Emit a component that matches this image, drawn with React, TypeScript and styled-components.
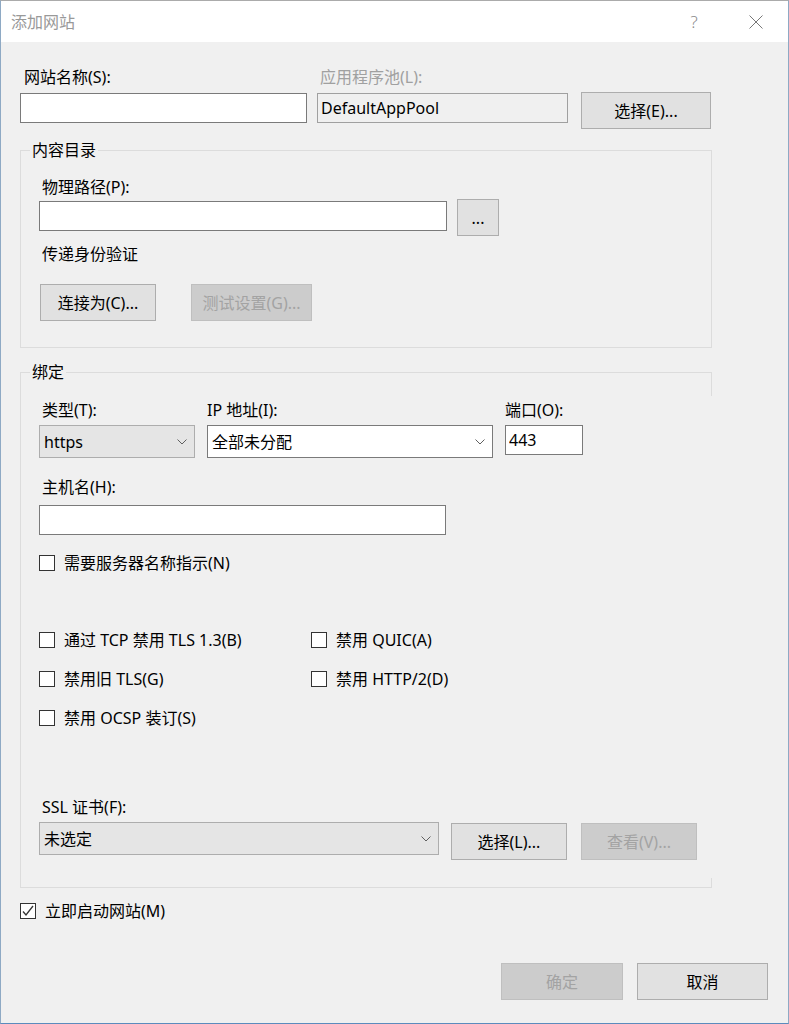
import React from "react";
import styled, { createGlobalStyle } from "styled-components";

const GlobalStyle = createGlobalStyle`
  html, body { margin: 0; padding: 0; background: #f0f0f0; }
  body {
    font-family: "Noto Sans", "Noto Sans CJK SC", sans-serif;
    font-size: 16px;
    color: #000;
  }
  * { box-sizing: border-box; }
`;

const Window = styled.div`
  width: 789px;
  height: 1024px;
  border: 1px solid;
  border-color: #ababab #8ea9c4 #5b8bbd #8ea9c4;
  background: #f0f0f0;
  display: flex;
  flex-direction: column;
  overflow: hidden;
`;

const TitleBar = styled.div`
  height: 41px;
  flex-shrink: 0;
  background: #fff;
  display: flex;
  align-items: center;
  padding: 0 12px 0 10px;
`;

const Title = styled.div`
  flex: 1;
  font-size: 16px;
  line-height: 20px;
  color: #999;
`;

const TitleControls = styled.div`
  display: flex;
  align-items: center;
  gap: 22px;
`;

const TitleButton = styled.div`
  width: 40px;
  height: 30px;
  display: flex;
  align-items: center;
  justify-content: center;
  color: #8a8a8a;
  font-size: 17px;
  font-weight: 300;
`;

const Body = styled.div`
  flex: 1;
  display: flex;
  flex-direction: column;
  padding: 25px 20px 0 19px;
`;

const Row = styled.div<{ $mt?: number }>`
  display: flex;
  align-items: flex-start;
  margin-top: ${(p) => p.$mt ?? 0}px;
`;

const Field = styled.div<{ $w: number; $ml?: number }>`
  display: flex;
  flex-direction: column;
  width: ${(p) => p.$w}px;
  margin-left: ${(p) => p.$ml ?? 0}px;
`;

const Label = styled.div<{ $indent?: number; $mb?: number; $mt?: number; $dim?: boolean }>`
  height: 20px;
  line-height: 20px;
  white-space: nowrap;
  padding-left: ${(p) => p.$indent ?? 0}px;
  margin-top: ${(p) => p.$mt ?? 0}px;
  margin-bottom: ${(p) => p.$mb ?? 0}px;
  color: ${(p) => (p.$dim ? "#a0a0a0" : "#000")};
`;

const TextInput = styled.input<{ $w?: number; $mt?: number; $readonly?: boolean }>`
  width: ${(p) => (p.$w ? `${p.$w}px` : "100%")};
  height: 30px;
  margin: ${(p) => p.$mt ?? 0}px 0 0 0;
  padding: 0 0 0 3px;
  font: inherit;
  font-size: 16px;
  color: #000;
  background: ${(p) => (p.$readonly ? "#f0f0f0" : "#fff")};
  border: 1px solid ${(p) => (p.$readonly ? "#a0a0a0" : "#7a7a7a")};
  border-radius: 0;
  outline: none;
`;

const Button = styled.button<{ $w: number; $ml?: number; $mt?: number }>`
  width: ${(p) => p.$w}px;
  height: 37px;
  margin: ${(p) => p.$mt ?? 0}px 0 0 ${(p) => p.$ml ?? 0}px;
  padding: 0;
  font: inherit;
  font-size: 16px;
  line-height: 20px;
  color: #000;
  background: #e1e1e1;
  border: 1px solid #adadad;
  border-radius: 0;
  flex-shrink: 0;

  &:disabled {
    color: #a3a3a3;
    background: #cccccc;
    border-color: #bfbfbf;
  }
`;

const Group = styled.fieldset<{ $mt: number; $pb: number; $partialRight?: boolean }>`
  position: relative;
  width: 692px;
  margin: ${(p) => p.$mt}px 0 0 0;
  padding: 0 0 ${(p) => p.$pb}px 0;
  min-width: 0;
  border: 1px solid #dcdcdc;
  ${(p) =>
    p.$partialRight
      ? `
    border-right: none;
    &::before, &::after {
      content: "";
      position: absolute;
      right: 0;
      width: 1px;
      background: #dcdcdc;
    }
    &::before { top: -10px; height: 24px; }
    &::after { bottom: 0; height: 9px; }
  `
      : ""}
`;

const Legend = styled.legend`
  margin-left: 9px;
  padding: 0 2px;
  font-size: 16px;
  line-height: 20px;
  color: #000;
`;

const GroupBody = styled.div<{ $pt: number }>`
  display: flex;
  flex-direction: column;
  padding: ${(p) => p.$pt}px 0 0 18px;
`;

const BindGrid = styled.div`
  display: grid;
  grid-template-columns: 156px 286px 78px;
  column-gap: 12px;
  align-items: start;
`;

const Combo = styled.div<{ $w?: number; $edit?: boolean }>`
  width: ${(p) => (p.$w ? `${p.$w}px` : "100%")};
  height: 33px;
  display: flex;
  align-items: center;
  justify-content: space-between;
  padding: 0 7px 0 4px;
  font-size: 16px;
  line-height: 20px;
  background: ${(p) => (p.$edit ? "#fff" : "#e5e5e5")};
  border: 1px solid ${(p) => (p.$edit ? "#7a7a7a" : "#adadad")};
  flex-shrink: 0;
`;

const Chevron = () => (
  <svg width="10" height="6" viewBox="0 0 10 6">
    <polyline points="0.5,0.5 5,5 9.5,0.5" fill="none" stroke="#606060" strokeWidth="1" />
  </svg>
);

const CheckRow = styled.label<{ $mt?: number }>`
  display: flex;
  align-items: center;
  height: 20px;
  margin-top: ${(p) => p.$mt ?? 0}px;
  white-space: nowrap;
`;

const CheckBox = styled.span`
  width: 16px;
  height: 16px;
  flex-shrink: 0;
  border: 1px solid #333;
  background: #fff;
  display: flex;
  align-items: center;
  justify-content: center;
`;

const CheckText = styled.span`
  margin-left: 9px;
  line-height: 20px;
  color: #000;
`;

const OptionsGrid = styled.div`
  display: grid;
  grid-template-columns: 272px auto;
  row-gap: 19px;
  margin-top: 57px;
`;

const Footer = styled.div`
  display: flex;
  justify-content: flex-end;
  margin-top: 42px;
`;

const Check: React.FC<{ label: string; checked?: boolean; mt?: number }> = ({ label, checked, mt }) => (
  <CheckRow $mt={mt}>
    <CheckBox>
      {checked && (
        <svg width="14" height="14" viewBox="0 0 14 14">
          <polyline points="2,7.5 5,11 12,2" fill="none" stroke="#333" strokeWidth="1.3" />
        </svg>
      )}
    </CheckBox>
    <CheckText>{label}</CheckText>
  </CheckRow>
);

export default function App() {
  return (
    <>
      <GlobalStyle />
      <Window>
        <TitleBar>
          <Title>添加网站</Title>
          <TitleControls>
            <TitleButton>?</TitleButton>
            <TitleButton>
              <svg width="14" height="14" viewBox="0 0 14 14">
                <path d="M0.5 0.5 L13.5 13.5 M13.5 0.5 L0.5 13.5" stroke="#777" strokeWidth="1" />
              </svg>
            </TitleButton>
          </TitleControls>
        </TitleBar>

        <Body>
          <Row>
            <Field $w={287}>
              <Label $indent={4} $mb={6}>网站名称(S):</Label>
              <TextInput />
            </Field>
            <Field $w={251} $ml={10}>
              <Label $indent={3} $mb={6} $dim>应用程序池(L):</Label>
              <TextInput $readonly readOnly value="DefaultAppPool" />
            </Field>
            <Button $w={130} $ml={13} $mt={25}>选择(E)...</Button>
          </Row>

          <Group $mt={11} $pb={26}>
            <Legend>内容目录</Legend>
            <GroupBody $pt={17}>
              <Label $indent={3} $mb={2}>物理路径(P):</Label>
              <Row>
                <TextInput $w={408} $mt={2} />
                <Button $w={42} $ml={10}>...</Button>
              </Row>
              <Label $indent={3} $mt={8}>传递身份验证</Label>
              <Row $mt={20}>
                <Button $w={116} $ml={1}>连接为(C)...</Button>
                <Button $w={121} $ml={35} disabled>测试设置(G)...</Button>
              </Row>
            </GroupBody>
          </Group>

          <Group $mt={14} $pb={27} $partialRight>
            <Legend>绑定</Legend>
            <GroupBody $pt={18}>
              <BindGrid>
                <div>
                  <Label $indent={3} $mb={5}>类型(T):</Label>
                  <Combo>
                    <span>https</span>
                    <Chevron />
                  </Combo>
                </div>
                <div>
                  <Label $mb={5}>IP 地址(I):</Label>
                  <Combo $edit>
                    <span>全部未分配</span>
                    <Chevron />
                  </Combo>
                </div>
                <div>
                  <Label $mb={5}>端口(O):</Label>
                  <TextInput value="443" readOnly />
                </div>
              </BindGrid>

              <Label $indent={3} $mt={19} $mb={8}>主机名(H):</Label>
              <TextInput $w={407} />

              <Check label="需要服务器名称指示(N)" mt={18} />

              <OptionsGrid>
                <Check label="通过 TCP 禁用 TLS 1.3(B)" />
                <Check label="禁用 QUIC(A)" />
                <Check label="禁用旧 TLS(G)" />
                <Check label="禁用 HTTP/2(D)" />
                <Check label="禁用 OCSP 装订(S)" />
              </OptionsGrid>

              <Label $indent={3} $mt={69} $mb={5}>SSL 证书(F):</Label>
              <Row>
                <Combo $w={400}>
                  <span>未选定</span>
                  <Chevron />
                </Combo>
                <Button $w={116} $ml={12} $mt={1}>选择(L)...</Button>
                <Button $w={116} $ml={14} $mt={1} disabled>查看(V)...</Button>
              </Row>
            </GroupBody>
          </Group>

          <Check label="立即启动网站(M)" checked mt={13} />

          <Footer>
            <Button $w={122} disabled>确定</Button>
            <Button $w={131} $ml={14}>取消</Button>
          </Footer>
        </Body>
      </Window>
    </>
  );
}
